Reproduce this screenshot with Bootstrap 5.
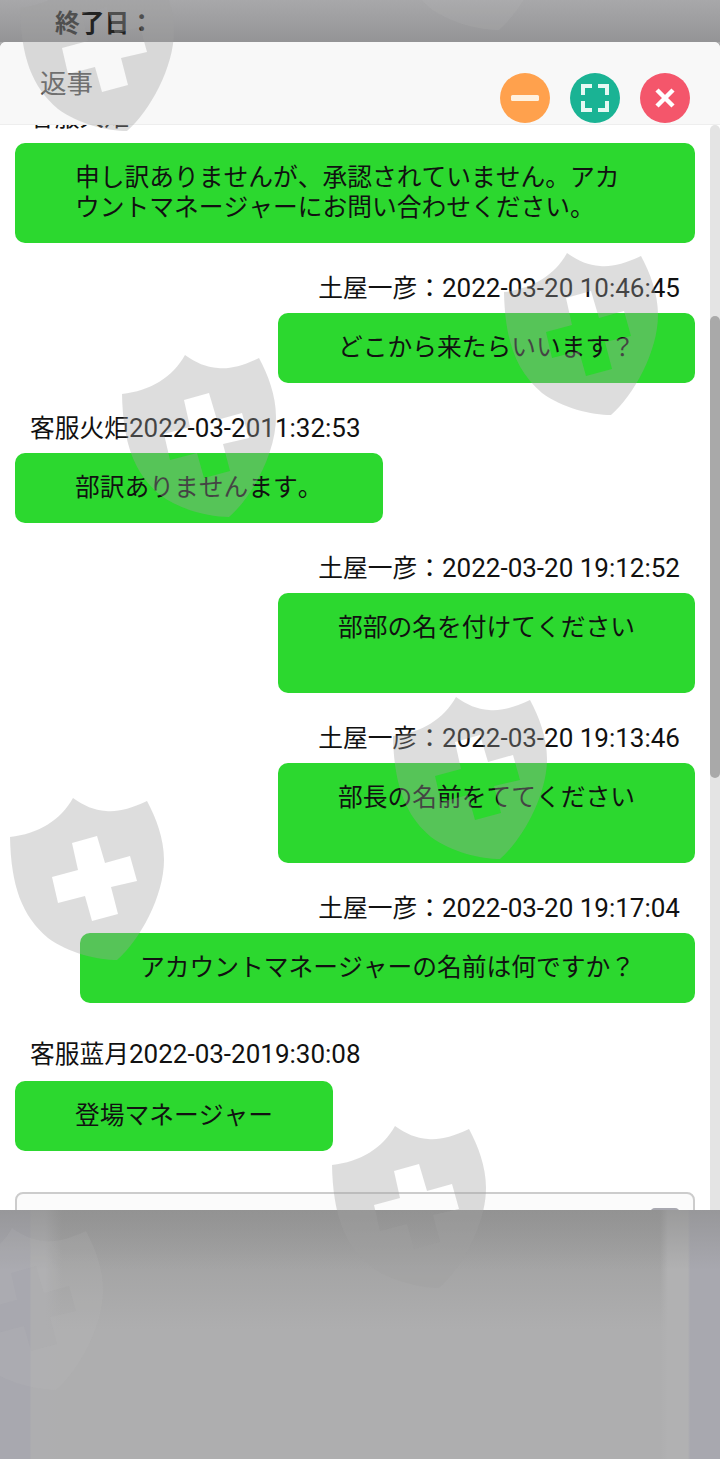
<!DOCTYPE html>
<html lang="ja">
<head>
  <meta charset="UTF-8" />
  <title>返事</title>
  <link rel="stylesheet" href="https://cdn.jsdelivr.net/npm/bootstrap@5.3.0/dist/css/bootstrap.min.css" />
  <style>
    body {
      background: #aeaeaf;
      font-family: Roboto, "Noto Sans CJK JP", sans-serif;
      font-size: 24.75px;
      font-kerning: none;
      color: #111;
    }
    /* page behind the dialog */
    .screen {
      position: relative;
      width: 720px;
      height: 1459px;
      overflow: hidden;
      background: #aeaeaf;
    }
    .top-strip {
      height: 42px;
      padding-left: 55px;
      background: linear-gradient(180deg, #a8a8aa, #949496);
      line-height: 47px;
      font-weight: 700;
      color: #222;
    }
    .bottom-strip {
      height: 249px;
      background:
        linear-gradient(180deg, rgba(140,140,140,.6), rgba(140,140,140,0) 60px),
        linear-gradient(90deg, #a8a8af 0, #a8a8af 30px, #aeaeb0 31px, #aeaeb0 45px, rgba(174,174,175,0) 62px, rgba(174,174,175,0) 660px, #b1b1b2 668px, #b1b1b2 688px, #a8a8af 690px, #a8a8af 100%),
        linear-gradient(180deg, #9c9c9c, #aeaeaf 120px);
    }
    /* dialog */
    .dialog {
      height: 1168px;
      background: #fff;
      border-radius: 6px 6px 0 0;
      overflow: hidden;
    }
    .dialog-head {
      height: 83px;
      flex: none;
      padding: 0 30px 0 40px;
      background: #f8f8f8;
      border-bottom: 1px solid #eee;
      color: #555;
    }
    .head-title {
      font-size: 26.5px;
      line-height: 84px;
    }
    .head-btns { gap: 20px; }
    .head-btn {
      width: 50px;
      height: 50px;
      margin-top: 31px;
      border: 0;
      padding: 0;
      border-radius: 50%;
    }
    .head-btn svg { display: block; margin: auto; }
    .btn-min { background: #ffa14d; }
    .btn-max { background: #1ab394; }
    .btn-close-x { background: #f4566b; }
    .dialog-main { min-height: 0; }
    .chat-log {
      min-width: 0;
      padding: 0 15px 0 15px;
      overflow: hidden;
    }
    .chat-row { margin-bottom: 30px; }
    .chat-row.first { margin-top: -22px; }
    .chat-row.late { margin-top: 36px; }
    .chat-row.late .who { margin-bottom: 12px; }
    .who {
      height: 30px;
      line-height: 30px;
      margin-bottom: 10px;
      padding: 0 15px;
      white-space: nowrap;
    }
    .stamp { font-size: 26px; }
    .bubble {
      display: inline-block;
      padding: 20px 60px;
      line-height: 30px;
      background: #2cd82f;
      border-radius: 10px;
      text-align: left;
    }
    .reply-box {
      position: relative;
      height: 60px;
      margin-top: 41px;
      border: 2px solid #ccc;
      border-radius: 8px;
      background: #fbfbfb;
    }
    .reply-send {
      position: absolute;
      right: 13px;
      top: 14px;
      width: 30px;
      height: 30px;
      border-radius: 5px;
      background: #a8a8b0;
    }
    .scroll-track {
      width: 10px;
      flex: none;
      background: #e4e4e4;
      border-radius: 5px 5px 0 0;
    }
    .scroll-thumb {
      height: 462px;
      margin-top: 191px;
      background: #a9a9a9;
      border-radius: 5px;
    }
    /* security watermark lies over everything */
    .watermark {
      position: absolute;
      inset: 0;
      pointer-events: none;
    }
  </style>
</head>
<body>
  <div class="screen d-flex flex-column">
    <div class="top-strip">終了日：</div>

    <div class="dialog d-flex flex-column">
      <div class="dialog-head d-flex justify-content-between">
        <div class="head-title">返事</div>
        <div class="d-flex head-btns">
          <button class="head-btn btn-min" type="button" aria-label="最小化">
            <svg width="30" height="30" viewBox="0 0 30 30"><rect x="1" y="12" width="28" height="6" rx="1.5" fill="#fff1df"/></svg>
          </button>
          <button class="head-btn btn-max" type="button" aria-label="最大化">
            <svg width="34" height="34" viewBox="0 0 34 34" fill="none" stroke="#e6f8f3" stroke-width="4"><path d="M14 5H5v9M20 5h9v9M5 20v9h9M29 20v9h-9"/></svg>
          </button>
          <button class="head-btn btn-close-x" type="button" aria-label="閉じる">
            <svg width="30" height="30" viewBox="0 0 30 30" fill="none" stroke="#fff" stroke-width="4.5"><path d="M7 7l16 16M23 7L7 23"/></svg>
          </button>
        </div>
      </div>

      <div class="dialog-main d-flex flex-grow-1">
        <div class="chat-log flex-grow-1">
          <div class="chat-row first">
            <div class="who">客服火炬</div>
            <div class="bubble">申し訳ありませんが、承認されていません。アカウントマネージャーにお問い合わせください。</div>
          </div>
          <div class="chat-row text-end">
            <div class="who">土屋一彦：<span class="stamp">2022-03-20 10:46:45</span></div>
            <div class="bubble">どこから来たらいいます？</div>
          </div>
          <div class="chat-row">
            <div class="who">客服火炬<span class="stamp">2022-03-2011:32:53</span></div>
            <div class="bubble">部訳ありませんます。</div>
          </div>
          <div class="chat-row text-end">
            <div class="who">土屋一彦：<span class="stamp">2022-03-20 19:12:52</span></div>
            <div class="bubble">部部の名を付けてください<br />&nbsp;</div>
          </div>
          <div class="chat-row text-end">
            <div class="who">土屋一彦：<span class="stamp">2022-03-20 19:13:46</span></div>
            <div class="bubble">部長の名前をててください<br />&nbsp;</div>
          </div>
          <div class="chat-row text-end">
            <div class="who">土屋一彦：<span class="stamp">2022-03-20 19:17:04</span></div>
            <div class="bubble">アカウントマネージャーの名前は何ですか？</div>
          </div>
          <div class="chat-row late">
            <div class="who">客服蓝月<span class="stamp">2022-03-2019:30:08</span></div>
            <div class="bubble">登場マネージャー</div>
          </div>
          <div class="reply-box"><span class="reply-send"></span></div>
        </div>
        <div class="scroll-track"><div class="scroll-thumb"></div></div>
      </div>
    </div>

    <div class="bottom-strip"></div>

    <svg class="watermark" width="720" height="1459" viewBox="0 0 720 1459">
      <defs>
        <path id="shield" fill-rule="evenodd" d="M63 0C51 22 28 36 0 39C1 88 12 118 38 140C58 155 88 162 107 162C130 142 154 98 154 62C154 40 146 20 137 3C120 11 108 14 96 13C84 12 74 8 63 0ZM62 45L87 38L95 65L120 58L127 83L101 89L108 116L82 123L75 98L48 105L42 79L68 72Z"/>
      </defs>
      <g fill="#a0a0a0" fill-opacity=".36">
        <use href="#shield" x="20" y="-31"/>
        <use href="#shield" x="504" y="253"/>
        <use href="#shield" x="122" y="355"/>
        <use href="#shield" x="393" y="697"/>
        <use href="#shield" x="10" y="798"/>
        <use href="#shield" x="332" y="1126"/>
      </g>
      <!-- these two sit on the grey page only and barely show there -->
      <g fill="#bcbcbc" fill-opacity=".14">
        <use href="#shield" x="392" y="-132"/>
        <use href="#shield" x="-51" y="1228"/>
      </g>
    </svg>
  </div>

  <script src="https://cdn.jsdelivr.net/npm/bootstrap@5.3.0/dist/js/bootstrap.bundle.min.js"></script>
</body>
</html>
